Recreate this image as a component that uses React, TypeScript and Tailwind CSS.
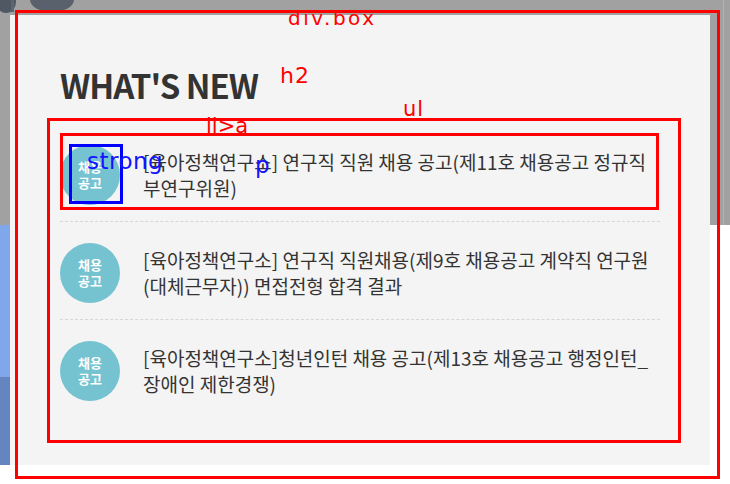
import React from 'react'

const news = [
  '[육아정책연구소] 연구직 직원 채용 공고(제11호 채용공고 정규직 부연구위원)',
  '[육아정책연구소] 연구직 직원채용(제9호 채용공고 계약직 연구원 (대체근무자)) 면접전형 합격 결과',
  '[육아정책연구소]청년인턴 채용 공고(제13호 채용공고 행정인턴_ 장애인 제한경쟁)',
]

const App = () => {
  return (
    <div className="relative w-[730px] h-[484px] overflow-hidden bg-white font-['Noto_Sans_CJK_KR','Noto_Sans',sans-serif]">
      {/* page behind the box */}
      <div className="absolute inset-0 flex flex-col">
        <div className="relative h-[225px] bg-[#a1a1a1]">
          <svg className="absolute left-0 top-0" width="80" height="16" viewBox="0 0 80 16">
            <ellipse cx="6" cy="2" rx="10" ry="11" fill="#4f5863" />
            <rect x="11" y="0" width="3" height="12" fill="#5d6670" />
            <ellipse cx="52" cy="0" rx="22" ry="12" fill="#59626c" />
          </svg>
          <div className="absolute right-[6px] top-0 h-full w-px bg-[#b3b3b3]" />
        </div>
        <div className="flex flex-1">
          <div className="flex w-[10px] flex-col">
            <div className="h-[152px] bg-[#80a7ea]" />
            <div className="h-[88px] bg-[#6585c1]" />
          </div>
        </div>
      </div>

      {/* div.box */}
      <div className="relative pl-[10px] pt-[15px]">
        <div className="w-[700px] h-[450px] bg-[#f4f4f4] pl-[50px] pt-[50px]">
          <h2 className="text-[33px] font-bold leading-[40px] tracking-[-1px] text-[#333]">
            WHAT'S NEW
          </h2>
          <ul className="mt-[19px] w-[600px]">
            {news.map((text, i) => (
              <li
                key={i}
                className={
                  i < news.length - 1
                    ? 'border-b border-dashed border-[#d6d6d6] pt-[21px] pb-[16px]'
                    : 'pt-[21px] pb-[16px]'
                }
              >
                <a className="flex items-center gap-[23px]">
                  <strong className="flex h-[60px] w-[60px] shrink-0 flex-col items-center justify-center rounded-full bg-[#75c2d0] text-[13px] font-bold leading-[16px] text-white">
                    <span>채용</span>
                    <span>공고</span>
                  </strong>
                  <p className="w-[515px] break-keep text-[19px] leading-[26px] text-[#333]">
                    {text}
                  </p>
                </a>
              </li>
            ))}
          </ul>
        </div>
      </div>

      {/* inspector overlays */}
      <div className="absolute left-[15px] top-[10px] h-[469px] w-[705px] border-[3px] border-[#ff0000]" />
      <div className="absolute left-[47px] top-[118px] h-[325px] w-[634px] border-[3px] border-[#ff0000]" />
      <div className="absolute left-[60px] top-[133px] h-[77px] w-[599px] border-[3px] border-[#ff0000]" />
      <div className="absolute left-[69px] top-[144px] h-[60px] w-[54px] border-[3px] border-[#0000ff]" />
      <span className="absolute left-[288px] top-[6px] font-['DejaVu_Sans',sans-serif] text-[20px] leading-[24px] tracking-[2.5px] text-[#ff0000]">
        div.box
      </span>
      <span className="absolute left-[280px] top-[63px] font-['DejaVu_Sans',sans-serif] text-[22px] leading-[26px] tracking-[1px] text-[#ff0000]">
        h2
      </span>
      <span className="absolute left-[403px] top-[96px] font-['DejaVu_Sans',sans-serif] text-[21px] leading-[26px] tracking-[1px] text-[#ff0000]">
        ul
      </span>
      <span className="absolute left-[206px] top-[113px] font-['DejaVu_Sans',sans-serif] text-[21px] font-medium leading-[26px] text-[#ff0000]">
        li&gt;a
      </span>
      <span className="absolute left-[87px] top-[148px] font-['DejaVu_Sans',sans-serif] text-[23px] font-medium leading-[26px] tracking-[0.5px] text-[#1414ff]">
        strong
      </span>
      <span className="absolute left-[255px] top-[152px] font-['DejaVu_Sans',sans-serif] text-[23px] font-medium leading-[26px] text-[#1414ff]">
        p
      </span>
    </div>
  )
}

export default App
